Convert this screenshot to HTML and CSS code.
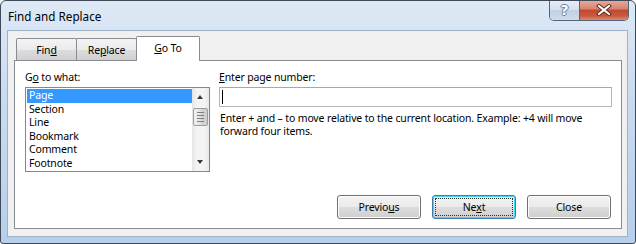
FILE: index.html
```html
<!DOCTYPE html>
<html lang="en">
<head>
	<meta charset="UTF-8">
	<title>Find and Replace</title>
	<link rel="stylesheet" href="styles.css">
</head>
<body>
	<div class="window">

		<!-- TITLE BAR --------------------------------- -->
		<div class="titlebar">
			<span class="title">Find and Replace</span>
			<div class="caption-buttons">
				<button class="cap-help">?</button>
				<button class="cap-close">
					<svg width="16" height="12" viewBox="0 0 16 12">
						<path d="M3 2 L13 10 M13 2 L3 10" stroke="#5b2a22" stroke-width="4" stroke-linecap="square" />
						<path d="M3 2 L13 10 M13 2 L3 10" stroke="#fff" stroke-width="2" stroke-linecap="square" />
					</svg>
				</button>
			</div>
		</div>

		<!-- CLIENT AREA --------------------------------- -->
		<div class="client">
			<div class="tabs">
				<div class="tab">Fin<u>d</u></div>
				<div class="tab">Re<u>p</u>lace</div>
				<div class="tab active"><u>G</u>o To</div>
			</div>

			<div class="panel">
				<div class="fields">
					<div class="col">
						<label class="field-label">G<u>o</u> to what:</label>
						<div class="listbox">
							<ul class="items">
								<li class="selected">Page</li>
								<li>Section</li>
								<li>Line</li>
								<li>Bookmark</li>
								<li>Comment</li>
								<li>Footnote</li>
							</ul>
							<div class="scrollbar">
								<span class="arrow up"></span>
								<div class="track">
									<span class="thumb"><i></i><i></i><i></i><i></i></span>
								</div>
								<span class="arrow down"></span>
							</div>
						</div>
					</div>
					<div class="col">
						<label class="field-label"><u>E</u>nter page number:</label>
						<div class="textbox"><span class="caret"></span></div>
						<p class="hint">Enter + and &ndash; to move relative to the current location. Example: +4 will move<br>forward four items.</p>
					</div>
				</div>

				<div class="actions">
					<button class="btn">Previo<u>u</u>s</button>
					<button class="btn default"><span class="focus">Ne<u>x</u>t</span></button>
					<button class="btn">Close</button>
				</div>
			</div>
		</div>

	</div>
</body>
</html>
```

FILE: styles.css
```css
/* GENERAL --------------------------------- */
* {
	box-sizing: border-box;
}
html,
body {
	margin: 0;
	padding: 0;
	background: #fff;
}
body {
	font-family: 'Noto Sans', 'Open Sans', sans-serif;
	font-size: 12px;
	color: #000;
}
button {
	font: inherit;
	color: inherit;
	letter-spacing: inherit;
}

/* WINDOW FRAME --------------------------------- */
.window {
	width: 636px;
	height: 244px;
	border: 1px solid #3e4a58;
	border-radius: 6px 6px 3px 3px;
	background: linear-gradient(to bottom, #dfe9f6 0%, #c9dbf0 40%, #b7cfeb 100%);
	display: flex;
	flex-direction: column;
	overflow: hidden;
}
.titlebar {
	height: 29px;
	display: flex;
	align-items: flex-start;
	flex-shrink: 0;
}
.title {
	padding: 7px 0 0 7px;
	line-height: 16px;
	font-size: 11.7px;
}
.caption-buttons {
	margin: -1px 6px 0 auto;
	display: flex;
	height: 21px;
	border: 1px solid #56647a;
	border-top: none;
	border-radius: 0 0 5px 5px;
	overflow: hidden;
}
.caption-buttons button {
	border: none;
	padding: 0;
	margin: 0;
	height: 20px;
	display: flex;
	align-items: center;
	justify-content: center;
}
.cap-help {
	width: 30px;
	border-right: 1px solid #56647a !important;
	background: linear-gradient(to bottom, #e6edf6 0%, #d5e0ee 50%, #c0cfe2 51%, #cfdcec 100%);
	font-family: 'DejaVu Sans', sans-serif !important;
	font-weight: bold !important;
	font-size: 14px !important;
	color: #fff !important;
	text-shadow: 1px 0 #6f7d8f, -1px 0 #6f7d8f, 0 1px #6f7d8f, 0 -1px #6f7d8f;
}
.cap-close {
	width: 48px;
	background: linear-gradient(to bottom, #e9aa9c 0%, #d88470 45%, #c2482e 50%, #c95a3f 80%, #dc8b72 100%);
}

/* CLIENT --------------------------------- */
.client {
	margin: 0 7px 0 6px;
	height: 207px;
	border: 1px solid #9fb1c6;
	background: #f0f0f0;
	padding: 5px 5px 7px 6px;
	display: flex;
	flex-direction: column;
	font-size: 10.5px;
	letter-spacing: -0.15px;
}

/* TABS --------------------------------- */
.tabs {
	display: flex;
	align-items: flex-end;
	height: 24px;
	padding-left: 2px;
	position: relative;
	z-index: 1;
}
.tab {
	width: 61px;
	height: 22px;
	margin-right: -1px;
	border: 1px solid #898c95;
	border-bottom: none;
	border-radius: 2px 2px 0 0;
	background: linear-gradient(to bottom, #f3f3f3 0%, #ebebeb 50%, #dddddd 51%, #cfcfcf 100%);
	text-align: center;
	line-height: 20px;
	padding-top: 1px;
}
.tab.active {
	width: 64px;
	height: 25px;
	margin-bottom: -1px;
	background: #fff;
	line-height: 20px;
	padding-top: 1px;
}

/* PANEL --------------------------------- */
.panel {
	flex: 1;
	background: #fff;
	border: 1px solid #898c95;
	padding: 9px 9px 9px 10px;
	display: flex;
	flex-direction: column;
}
.fields {
	display: grid;
	grid-template-columns: 185px 393px;
	column-gap: 9px;
}
.field-label {
	display: block;
	line-height: 15px;
	margin-bottom: 2px;
}

/* LIST BOX --------------------------------- */
.listbox {
	height: 85px;
	border: 1px solid #828790;
	display: flex;
	padding: 1px 0 1px 1px;
}
.items {
	list-style: none;
	margin: 0;
	padding: 0;
	flex: 1;
}
.items li {
	line-height: 13.6px;
	height: 13.6px;
	padding-left: 2px;
}
.items li.selected {
	background: #3399ff;
	color: #fff;
}
.scrollbar {
	width: 17px;
	margin: -1px 0 -1px 0;
	display: flex;
	flex-direction: column;
	background: linear-gradient(to right, #e5e5e5, #f4f4f4 30%, #f4f4f4 70%, #e8e8e8);
}
.arrow {
	height: 17px;
	position: relative;
}
.arrow::after {
	content: '';
	position: absolute;
	left: 5px;
	border-left: 3.5px solid transparent;
	border-right: 3.5px solid transparent;
}
.arrow.up::after {
	top: 7px;
	border-bottom: 4px solid #3a3a3a;
}
.arrow.down::after {
	top: 6px;
	border-top: 4px solid #3a3a3a;
}
.track {
	flex: 1;
	padding: 3px 1px 0 1px;
}
.thumb {
	display: flex;
	flex-direction: column;
	align-items: center;
	justify-content: center;
	gap: 2px;
	height: 18px;
	border: 1px solid #9a9da3;
	border-radius: 2px;
	background: linear-gradient(to right, #f1f1f1, #e2e2e2 50%, #d6d6d6 51%, #cdcdcd);
}
.thumb i {
	display: block;
	width: 7px;
	height: 1px;
	background: #7d8088;
}

/* TEXT BOX --------------------------------- */
.textbox {
	height: 20px;
	border: 1px solid #b2b6be;
	border-top-color: #a4a8b0;
	padding: 2px 0 0 2px;
}
.caret {
	display: block;
	width: 1px;
	height: 14px;
	background: #000;
}
.hint {
	margin: 5px 0 0 1px;
	line-height: 13px;
}

/* BUTTONS --------------------------------- */
.actions {
	margin-top: auto;
	display: flex;
	justify-content: flex-end;
	gap: 11px;
	padding-right: 1px;
}
.btn {
	width: 84px;
	height: 24px;
	padding: 0;
	border: 1px solid #707070;
	border-radius: 3px;
	background: linear-gradient(to bottom, #f2f2f2 0%, #ebebeb 50%, #dddddd 51%, #cfcfcf 100%);
	box-shadow: inset 0 0 0 1px #fcfcfc;
	display: flex;
	align-items: center;
	justify-content: center;
}
.btn.default {
	border-color: #3c7fb1;
	box-shadow: inset 0 0 0 1px #48d6f5;
	padding: 2px;
}
.btn .focus {
	flex: 1;
	align-self: stretch;
	display: flex;
	align-items: center;
	justify-content: center;
	border: 1px dotted #333;
}
```
